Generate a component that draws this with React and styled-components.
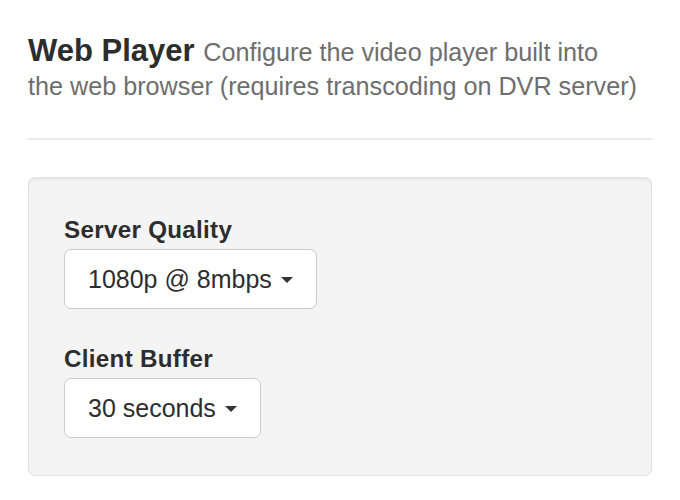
import React from "react";
import styled, { createGlobalStyle } from "styled-components";

const Global = createGlobalStyle`
  html, body { margin: 0; padding: 0; background: #fff; }
  body { font-family: "Liberation Sans", Arial, Helvetica, sans-serif; color: #333; }
`;

const Page = styled.div`
  padding: 34px 28px 0 28px;
`;

const Header = styled.div`
  padding-bottom: 36px;
  border-bottom: 2px solid #ebebeb;
  margin-bottom: 37px;
`;

const Title = styled.h4`
  margin: 0;
  font-size: 31px;
  line-height: 34px;
  font-weight: 700;
  color: #2d2d2d;
`;

const Sub = styled.small`
  font-size: 25.2px;
  line-height: 1;
  font-weight: 400;
  color: #6e6e6e;
`;

const Well = styled.div`
  background: #f4f4f4;
  border: 1px solid #e2e2e2;
  border-radius: 7px;
  box-shadow: inset 0 2px 2px rgba(0, 0, 0, 0.05);
  padding: 37px 35px 37px 35px;
  display: flex;
  flex-direction: column;
  gap: 35px;
`;

const Group = styled.div`
  display: flex;
  flex-direction: column;
  align-items: flex-start;
  gap: 4px;
`;

const Label = styled.label`
  font-size: 24.2px;
  line-height: 30px;
  font-weight: 700;
  color: #2d2d2d;
  letter-spacing: 0.3px;
`;

const Select = styled.button`
  display: inline-flex;
  align-items: center;
  gap: 9px;
  height: 60px;
  box-sizing: border-box;
  padding: 0 23px 0 23px;
  background: #fff;
  border: 1px solid #cbcbcb;
  border-radius: 7px;
  font-family: inherit;
  font-size: 25px;
  color: #2d2d2d;
  cursor: pointer;
`;

const Caret = styled.span`
  display: inline-block;
  width: 0;
  height: 0;
  border-left: 6px solid transparent;
  border-right: 6px solid transparent;
  border-top: 6px solid #333;
  margin-top: 2px;
`;

const fields = [
  { label: "Server Quality", value: "1080p @ 8mbps" },
  { label: "Client Buffer", value: "30 seconds" },
];

export default function App() {
  return (
    <>
      <Global />
      <Page>
        <Header>
          <Title>
            Web Player{" "}
            <Sub>
              Configure the video player built into
              <br />
              the web browser (requires transcoding on DVR server)
            </Sub>
          </Title>
        </Header>
        <Well>
          {fields.map((f) => (
            <Group key={f.label}>
              <Label>{f.label}</Label>
              <Select>
                {f.value}
                <Caret />
              </Select>
            </Group>
          ))}
        </Well>
      </Page>
    </>
  );
}
